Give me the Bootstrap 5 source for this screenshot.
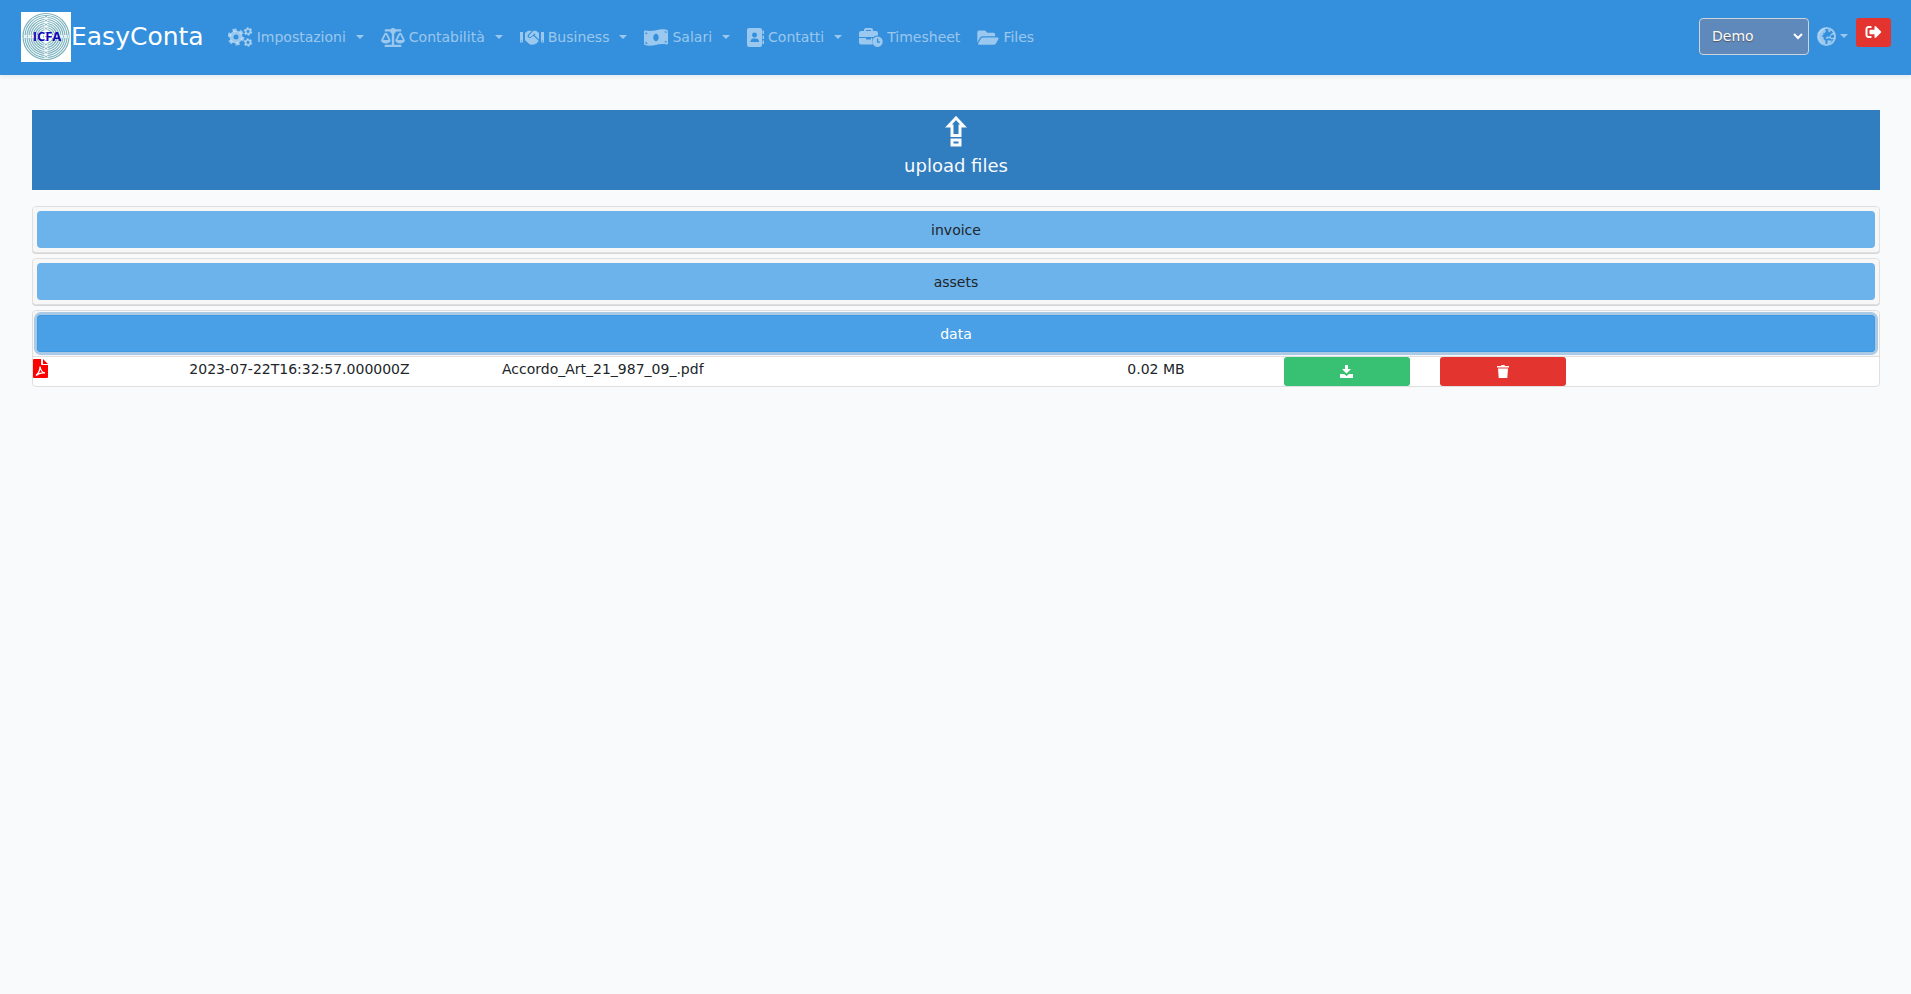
<!DOCTYPE html>
<html lang="it">
<head>
<meta charset="utf-8">
<meta name="viewport" content="width=device-width, initial-scale=1">
<title>EasyConta</title>
<link href="https://cdn.jsdelivr.net/npm/bootstrap@5.3.0/dist/css/bootstrap.min.css" rel="stylesheet">
<style>
  body { background: #f8fafc; color: #212529; font-family: "DejaVu Sans", sans-serif; font-size: 14px; line-height: 24px; }
  .topbar { background: #3490dc; padding: 12px 20px 13px 21px; }
  .topbar .navbar-brand { font-size: 25px; line-height: 40px; color: #fff; padding: 0; margin: 0 16px 0 0; }
  .topbar .nav-link { color: rgba(255,255,255,.5); padding: 8px; display: flex; align-items: center; gap: 4px; }
  .topbar .navbar-nav { gap: 1px; }
  .topbar .dropdown-toggle::after { margin-left: 6px; border-top-width: 4px; border-left-width: 4px; border-right-width: 4px; }
  .topbar .lang-toggle { padding: 0; gap: 0; }
  .topbar .lang-toggle::after { margin-left: 4px; }
  .topbar .company { width: 110px; height: 37px; padding: 6px 32px 6px 12px; font-size: 14px; line-height: 23px; color: #f8fafc; background-color: #6089bb; border: 1px solid #ced4da; border-radius: 4px;
    background-position: right 4px center; background-size: 12px 12px;
    background-image: url("data:image/svg+xml,%3Csvg xmlns='http://www.w3.org/2000/svg' viewBox='0 0 12 12'%3E%3Cpath fill='none' stroke='%23fff' stroke-width='2' d='M2 4l4 4 4-4'/%3E%3C/svg%3E"); text-shadow: 0 1px 1px #555; }
  .tools { gap: 8px; margin-bottom: 2px; }
  .btn-sq { border-radius: 3px; border: 0; color: #fff; padding: 0; height: 29px; }
  .btn-red, .btn-red:hover { background: #e3342f; color: #fff; }
  .btn-green, .btn-green:hover { background: #38c172; color: #fff; }
  .icon { fill: currentColor; display: block; flex: none; }
  .page { padding: 35px 31px 0 32px; }
  .upload, .upload:hover { background: #307dbf; color: #f8fafc; font-size: 18px; line-height: 29px; border: 0; border-radius: 0; height: 80px; padding: 0 0 4px; margin-bottom: 16px; }
  .folder { border: 1px solid #dfdfdf; border-radius: 4px; background: #fff; margin-bottom: 5px; }
  .folder-head { background: #f7f7f7; padding: 4px; border-radius: 4px; }
  .folder.closed { box-shadow: 0 1px 0 #d6d6d6; }
  .folder.open .folder-head { border-bottom: 1px solid #dfdfdf; border-radius: 4px 4px 0 0; }
  .btn-folder, .btn-folder:hover { height: 37px; padding: 1px 0 0; border: 0; border-radius: 4px; font-size: 14px; background: #6cb2eb; color: #212529; }
  .folder.open .btn-folder { background: #4aa0e6; color: #fff; box-shadow: inset 0 0 0 1px #3f9ae5, 0 0 0 3px #a9c9e5; }
  .file-row { --bs-gutter-x: 30px; }
  .files { overflow: hidden; line-height: 25px; }
</style>
</head>
<body>
<nav class="navbar navbar-expand topbar shadow-sm">
  <a class="navbar-brand d-flex align-items-center" href="#">
    <svg width="50" height="50" viewBox="0 0 50 50" aria-hidden="true">
      <rect width="50" height="50" fill="#fff"/>
      <g fill="none" stroke="#7fb4bf" stroke-width="1.200">
        <circle cx="25" cy="24.500" r="23"/><circle cx="25" cy="24.500" r="21"/><circle cx="25" cy="24.500" r="19"/><circle cx="25" cy="24.500" r="17"/><circle cx="25" cy="24.500" r="15"/><circle cx="25" cy="24.500" r="13"/><circle cx="25" cy="24.500" r="11"/><circle cx="25" cy="24.500" r="9"/><circle cx="25" cy="24.500" r="7"/>
      </g>
      <path d="M25 4v42M2 24.500h46" stroke="#fff" stroke-width="3" opacity=".7"/>
      <path d="M25 4v42M2 24.500h46" stroke="#8dbcc6" stroke-width="2" stroke-dasharray="1 3"/>
      <text x="26" y="29" text-anchor="middle" font-family="Open Sans, sans-serif" font-weight="700" font-size="13" fill="#1206b8">ICFA</text>
    </svg>
    <span>EasyConta</span>
  </a>
  <ul class="navbar-nav me-auto">
    <li class="nav-item dropdown"><a class="nav-link dropdown-toggle" href="#" role="button">
      <svg class="icon" width="25" height="20" viewBox="0 0 25 20"><circle cx="8" cy="10" r="4.500" fill="none" stroke="currentColor" stroke-width="4"/><circle cx="8" cy="10" r="7" fill="none" stroke="currentColor" stroke-width="3" stroke-dasharray="4 3.330"/><g fill="none" stroke="currentColor"><circle cx="20" cy="4.500" r="2.300" stroke-width="1.800"/><circle cx="20" cy="4.500" r="3.500" stroke-width="1.500" stroke-dasharray="2 1.660"/><circle cx="20" cy="15.500" r="2.300" stroke-width="1.800"/><circle cx="20" cy="15.500" r="3.500" stroke-width="1.500" stroke-dasharray="2 1.660"/></g></svg>
      <span>Impostazioni</span></a></li>
    <li class="nav-item dropdown"><a class="nav-link dropdown-toggle" href="#" role="button">
      <svg class="icon" width="24" height="19" viewBox="0 0 640 512"><path d="M256 336h-.02c0-16.18 1.34-8.73-85.05-181.51-17.65-35.29-68.19-35.36-85.87 0C-2.06 328.75.02 320.33.02 336H0c0 44.18 57.31 80 128 80s128-35.82 128-80zM128 176l72 144H56l72-144zm511.980 160c0-16.180 1.340-8.730-85.050-181.510-17.650-35.290-68.190-35.360-85.870 0-87.120 174.260-85.040 165.840-85.040 181.510H384c0 44.180 57.310 80 128 80s128-35.820 128-80h-.02zM440 320l72-144 72 144H440zm88 128H352V153.250c23.510-10.290 41.160-31.480 46.390-57.250H528c8.840 0 16-7.160 16-16V48c0-8.840-7.160-16-16-16H383.640C369.040 12.680 346.090 0 320 0s-49.040 12.680-63.640 32H112c-8.840 0-16 7.160-16 16v32c0 8.840 7.160 16 16 16h129.610c5.230 25.760 22.870 46.960 46.390 57.250V448H112c-8.840 0-16 7.160-16 16v32c0 8.840 7.160 16 16 16h416c8.840 0 16-7.160 16-16v-32c0-8.840-7.160-16-16-16z"/></svg>
      <span>Contabilità</span></a></li>
    <li class="nav-item dropdown"><a class="nav-link dropdown-toggle" href="#" role="button">
      <svg class="icon" width="24" height="19" viewBox="0 0 24 19"><path fill-rule="evenodd" d="M0 4h3v9.500q0 1-1 1H0zM21 4h3v10.500h-2q-1 0-1-1zM1 12.500v1h1v-1zM22 12.500v1h1v-1z"/><path d="M5 5l3-2.200h4L8 6.800q-1 1.500.3 2.700 2 1.200 3.700-.8L13.500 8l5 4.500q.3 1.800-1.300 1.900-.2 1.500-2 1.300-.7 1.300-2.500.7-2 .9-3.500-.4L5.500 12.500H5zM13.500 2.800H16L19 5v6.500L14.500 7.300l1-1-.8-.8-3.500 3q-1.200 1-2.200 0-.4-.7.300-1.500z"/></svg>
      <span>Business</span></a></li>
    <li class="nav-item dropdown"><a class="nav-link dropdown-toggle" href="#" role="button">
      <svg class="icon" width="24" height="19" viewBox="0 0 24 19"><path fill-rule="evenodd" d="M0 3.500Q0 2.300 1.500 2.600C10 4.500 14 0 22.500 1.700Q24 2 24 3v12.500q0 1.200-1.500.9C14 14.500 10 19 1.500 17.300Q0 17 0 16zM12 5.800c-3.600 0-3.600 7.400 0 7.400s3.600-7.400 0-7.400zM1.500 4.500v1.800Q3.500 6.300 3.500 4.800zM20.500 3.200Q20.500 5 22.500 5V3.500zM1.500 13.700v2l2 .3Q3.500 14 1.500 13.700zM22.500 12.700Q20.500 12.800 20.500 14.300l2 .3z"/></svg>
      <span>Salari</span></a></li>
    <li class="nav-item dropdown"><a class="nav-link dropdown-toggle" href="#" role="button">
      <svg class="icon" width="17" height="19" viewBox="0 0 17 19"><path fill-rule="evenodd" d="M2 0h11q2 0 2 2v15q0 2-2 2H2q-2 0-2-2V2q0-2 2-2zM7.500 4.500a2.500 2.500 0 1 0 .01 0zM3.500 14h8.500q0-3.500-3-3.500H6.500q-3 0-3 3.500zM15.500 2.500h1.500v3.500h-1.500zM15.500 7.500h1.500V11h-1.500zM15.500 12.500h1.500V16h-1.500z"/></svg>
      <span>Contatti</span></a></li>
    <li class="nav-item"><a class="nav-link" href="#">
      <svg class="icon" width="24" height="19" viewBox="0 0 24 19"><path fill-rule="evenodd" d="M5 3V2q0-2 2-2h5q2 0 2 2v1h3q2 0 2 2v2.500q-3-.3-4.500 1.500H0V5q0-2 2-2zM7 3h5V2H7zM0 10h7v1.500h5V10h1.500q-1.500 3.500.2 6.500H2q-2 0-2-2z"/><path fill-rule="evenodd" d="M18.500 8.500a5.200 5.200 0 1 0 .01 0zM18 10.500h1.300v3H21v1.300h-3z"/></svg>
      <span>Timesheet</span></a></li>
    <li class="nav-item"><a class="nav-link" href="#">
      <svg class="icon" width="22" height="19" viewBox="0 0 576 512"><path d="M572.694 292.093L500.270 416.248A63.997 63.997 0 0 1 444.989 448H45.025c-18.523 0-30.064-20.093-20.731-36.093l72.424-124.155A64 64 0 0 1 152 256h399.964c18.523 0 30.064 20.093 20.730 36.093zM152 224h328v-48c0-26.510-21.490-48-48-48H272l-64-64H48C21.490 64 0 85.490 0 112v278.046l69.077-118.418C86.214 242.250 117.989 224 152 224z"/></svg>
      <span>Files</span></a></li>
  </ul>
  <div class="d-flex align-items-start tools">
    <select class="form-select company" aria-label="Azienda"><option>Demo</option></select>
    <a class="nav-link dropdown-toggle lang-toggle align-self-center" href="#" role="button" aria-label="Lingua">
      <svg class="icon" width="19" height="19" viewBox="0 0 20 20"><circle cx="10" cy="10" r="9" fill="none" stroke="currentColor" stroke-width="2"/><path d="M2 6l4-4 3-1-1 2 1.500 1L8 6.500 6.500 6 7 8 5 9.500l2 1.500v2l2 1.500V18Q3 17 1.500 11zM12 2l2.500 1.500-1 2-1.500-.5zM17 6l1.500 2-3 .5-1.500 1.500 1.500 1.500 3-.5-.5 1.500-3 .5-2-1.500-3 1-1-1 2-1.500 2 .3L15 7z"/><path d="M11 14l5 .5-3 3-2 .5z"/></svg>
    </a>
    <button class="btn btn-sq btn-red px-2" type="button" aria-label="Esci">
      <svg class="icon" width="19" height="16" viewBox="0 0 512 512"><path d="M497 273L329 441c-15 15-41 4.500-41-17v-96H152c-13.300 0-24-10.700-24-24v-96c0-13.300 10.700-24 24-24h136V88c0-21.400 25.900-32 41-17l168 168c9.300 9.400 9.300 24.600 0 34zM192 436v-40c0-6.600-5.400-12-12-12H96c-17.700 0-32-14.300-32-32V160c0-17.700 14.300-32 32-32h84c6.600 0 12-5.400 12-12V76c0-6.600-5.400-12-12-12H96c-53 0-96 43-96 96v192c0 53 43 96 96 96h84c6.600 0 12-5.400 12-12z"/></svg>
    </button>
  </div>
</nav>

<main class="page">
  <button class="btn upload w-100 d-flex flex-column align-items-center justify-content-center" type="button">
    <svg class="icon mb-1" width="22" height="31" viewBox="0 0 22 31"><path d="M11 2L3.500 10H7v9.500h8V10h3.500zM7 24h8v5H7z" fill="none" stroke="currentColor" stroke-width="3"/></svg>
    <span>upload files</span>
  </button>

  <section class="folder closed"><div class="folder-head"><button class="btn btn-folder w-100 d-block" type="button">invoice</button></div></section>
  <section class="folder closed"><div class="folder-head"><button class="btn btn-folder w-100 d-block" type="button">assets</button></div></section>
  <section class="folder open">
    <div class="folder-head"><button class="btn btn-folder w-100 d-block" type="button">data</button></div>
    <div class="files">
      <div class="row file-row">
        <div class="col-1"><svg class="icon" width="15" height="23" viewBox="0 0 15 23"><path fill="#f00" d="M1 2h7v5q0 1 1 1h6v12q0 1-1 1H1q-1 0-1-1V3q0-1 1-1zM10 2l5 5h-5z"/><path d="M3 18.500Q7 15 7 9.500q1 6 5 6.500Q7 15 3 18.500z" fill="none" stroke="#fff" stroke-width="1.300"/></svg></div>
        <div class="col-2">2023-07-22T16:32:57.000000Z</div>
        <div class="col-4">Accordo_Art_21_987_09_.pdf</div>
        <div class="col-1">0.02 MB</div>
        <div class="col-1"><button class="btn btn-sq btn-green w-100 d-flex align-items-center justify-content-center" type="button" aria-label="Scarica"><svg class="icon" width="13" height="13" viewBox="0 0 13 13"><path d="M5 0h3v4h3L6.500 8.500 2 4h3zM0 9h4l2.500 2L9 9h4v4H0z"/></svg></button></div>
        <div class="col-1"><button class="btn btn-sq btn-red w-100 d-flex align-items-center justify-content-center" type="button" aria-label="Elimina"><svg class="icon" width="12" height="13" viewBox="0 0 12 13"><path d="M0 1h4l.5-1h3L8 1h4v1.500H0zM1 3.500h10L10.300 13H1.700z"/></svg></button></div>
      </div>
    </div>
  </section>
</main>
<script src="https://cdn.jsdelivr.net/npm/bootstrap@5.3.0/dist/js/bootstrap.bundle.min.js"></script>
</body>
</html>
